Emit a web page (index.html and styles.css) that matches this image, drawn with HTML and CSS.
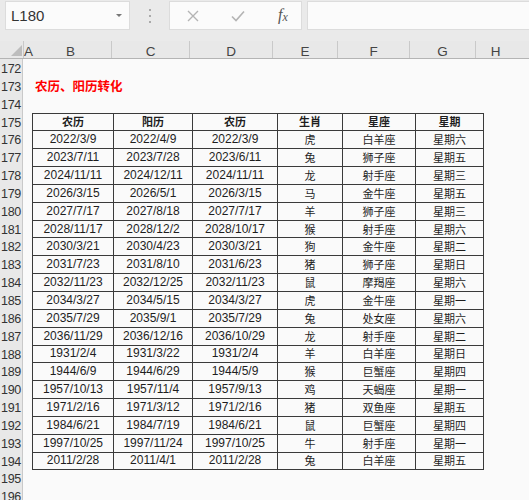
FILE: index.html
```html
<!DOCTYPE html>
<html lang="zh">
<head>
<meta charset="utf-8">
<link rel="stylesheet" href="styles.css">
</head>
<body>
<div class="toolbar">
  <div class="namebox"><span class="ref">L180</span><span class="drop"></span></div>
  <div class="dots"><i></i><i></i><i></i></div>
  <div class="btns">
    <svg class="ic" width="14" height="14" viewBox="0 0 14 14"><path d="M2 2 L12 12 M12 2 L2 12" stroke="#b4b4b4" stroke-width="1.4" fill="none"/></svg>
    <svg class="ic" width="16" height="14" viewBox="0 0 16 14"><path d="M2 7.5 L6 11.5 L14 2.5" stroke="#b4b4b4" stroke-width="1.6" fill="none"/></svg>
    <span class="fx">f<sub>x</sub></span>
  </div>
  <div class="formula"></div>
</div>
<div class="colhead">
  <div class="corner"><span class="tri"></span></div>
  <div class="ch a">A</div>
  <div class="ch b">B</div>
  <div class="ch c">C</div>
  <div class="ch d">D</div>
  <div class="ch e">E</div>
  <div class="ch f">F</div>
  <div class="ch g">G</div>
  <div class="ch h">H</div>
</div>
<div class="sheet">
  <div class="rowheads">
    <div>172</div><div>173</div><div>174</div><div>175</div><div>176</div><div>177</div><div>178</div><div>179</div><div>180</div><div>181</div><div>182</div><div>183</div><div>184</div><div>185</div><div>186</div><div>187</div><div>188</div><div>189</div><div>190</div><div>191</div><div>192</div><div>193</div><div>194</div><div>195</div><div>196</div>
  </div>
  <div class="grid">
    <div class="row"></div>
    <div class="row title">农历、阳历转化</div>
    <div class="row"></div>
    <table class="tbl">
      <colgroup><col class="cb"><col class="cc"><col class="cd"><col class="ce"><col class="cf"><col class="cg"></colgroup>
      <thead>
        <tr><th>农历</th><th>阳历</th><th>农历</th><th>生肖</th><th>星座</th><th>星期</th></tr>
      </thead>
      <tbody>
        <tr><td>2022/3/9</td><td>2022/4/9</td><td>2022/3/9</td><td class="zh">虎</td><td class="zh">白羊座</td><td class="zh">星期六</td></tr>
        <tr><td>2023/7/11</td><td>2023/7/28</td><td>2023/6/11</td><td class="zh">兔</td><td class="zh">狮子座</td><td class="zh">星期五</td></tr>
        <tr><td>2024/11/11</td><td>2024/12/11</td><td>2024/11/11</td><td class="zh">龙</td><td class="zh">射手座</td><td class="zh">星期三</td></tr>
        <tr><td>2026/3/15</td><td>2026/5/1</td><td>2026/3/15</td><td class="zh">马</td><td class="zh">金牛座</td><td class="zh">星期五</td></tr>
        <tr><td>2027/7/17</td><td>2027/8/18</td><td>2027/7/17</td><td class="zh">羊</td><td class="zh">狮子座</td><td class="zh">星期三</td></tr>
        <tr><td>2028/11/17</td><td>2028/12/2</td><td>2028/10/17</td><td class="zh">猴</td><td class="zh">射手座</td><td class="zh">星期六</td></tr>
        <tr><td>2030/3/21</td><td>2030/4/23</td><td>2030/3/21</td><td class="zh">狗</td><td class="zh">金牛座</td><td class="zh">星期二</td></tr>
        <tr><td>2031/7/23</td><td>2031/8/10</td><td>2031/6/23</td><td class="zh">猪</td><td class="zh">狮子座</td><td class="zh">星期日</td></tr>
        <tr><td>2032/11/23</td><td>2032/12/25</td><td>2032/11/23</td><td class="zh">鼠</td><td class="zh">摩羯座</td><td class="zh">星期六</td></tr>
        <tr><td>2034/3/27</td><td>2034/5/15</td><td>2034/3/27</td><td class="zh">虎</td><td class="zh">金牛座</td><td class="zh">星期一</td></tr>
        <tr><td>2035/7/29</td><td>2035/9/1</td><td>2035/7/29</td><td class="zh">兔</td><td class="zh">处女座</td><td class="zh">星期六</td></tr>
        <tr><td>2036/11/29</td><td>2036/12/16</td><td>2036/10/29</td><td class="zh">龙</td><td class="zh">射手座</td><td class="zh">星期二</td></tr>
        <tr><td>1931/2/4</td><td>1931/3/22</td><td>1931/2/4</td><td class="zh">羊</td><td class="zh">白羊座</td><td class="zh">星期日</td></tr>
        <tr><td>1944/6/9</td><td>1944/6/29</td><td>1944/5/9</td><td class="zh">猴</td><td class="zh">巨蟹座</td><td class="zh">星期四</td></tr>
        <tr><td>1957/10/13</td><td>1957/11/4</td><td>1957/9/13</td><td class="zh">鸡</td><td class="zh">天蝎座</td><td class="zh">星期一</td></tr>
        <tr><td>1971/2/16</td><td>1971/3/12</td><td>1971/2/16</td><td class="zh">猪</td><td class="zh">双鱼座</td><td class="zh">星期五</td></tr>
        <tr><td>1984/6/21</td><td>1984/7/19</td><td>1984/6/21</td><td class="zh">鼠</td><td class="zh">巨蟹座</td><td class="zh">星期四</td></tr>
        <tr><td>1997/10/25</td><td>1997/11/24</td><td>1997/10/25</td><td class="zh">牛</td><td class="zh">射手座</td><td class="zh">星期一</td></tr>
        <tr><td>2011/2/28</td><td>2011/4/1</td><td>2011/2/28</td><td class="zh">兔</td><td class="zh">白羊座</td><td class="zh">星期五</td></tr>
      </tbody>
    </table>
  </div>
</div>
</body>
</html>
```

FILE: styles.css
```css
* { box-sizing: border-box; }
html, body { margin: 0; padding: 0; }
body {
  width: 529px;
  height: 500px;
  overflow: hidden;
  background: #fafafa;
  font-family: "Liberation Sans", "Noto Sans CJK SC", sans-serif;
  color: #222;
}
.toolbar {
  height: 41px;
  background: #eaeaea;
  display: flex;
  align-items: flex-start;
  padding: 1px 0 0 5px;
}
.namebox {
  width: 125px;
  height: 29px;
  background: #fbfbfb;
  border: 1px solid #dcdcdc;
  display: flex;
  align-items: center;
  justify-content: space-between;
  padding: 0 7px 0 5px;
}
.ref { font-size: 15px; color: #333; }
.drop {
  width: 0; height: 0;
  border-left: 3px solid transparent;
  border-right: 3px solid transparent;
  border-top: 3px solid #777;
}
.dots {
  width: 39px;
  height: 29px;
  display: flex;
  flex-direction: column;
  align-items: center;
  justify-content: center;
  gap: 4px;
}
.dots i { width: 2px; height: 2px; background: #aaa; display: block; }
.btns {
  width: 133px;
  height: 29px;
  background: #fbfbfb;
  border: 1px solid #dcdcdc;
  display: flex;
  align-items: center;
  padding-left: 16px;
}
.btns .ic:first-child { margin-right: 30px; }
.btns .ic:nth-child(2) { margin-right: 32px; }
.fx {
  font-family: "Liberation Serif", serif;
  font-style: italic;
  font-size: 16px;
  color: #555;
}
.fx sub { font-size: 12px; vertical-align: -1px; }
.formula {
  flex: 1;
  height: 29px;
  margin-left: 5px;
  background: #fbfbfb;
  border: 1px solid #dcdcdc;
  border-right: none;
}
.colhead {
  height: 18px;
  display: flex;
  background: #e8e8e8;
  border-bottom: 1px solid #b4b4b4;
}
.corner {
  width: 23px;
  position: relative;
}
.tri {
  position: absolute;
  right: 1px;
  bottom: 2px;
  width: 0; height: 0;
  border-left: 11px solid transparent;
  border-bottom: 11px solid #bdbdbd;
}
.ch {
  font-size: 13.5px;
  color: #444;
  text-align: center;
  line-height: 21px;
  border-right: 1px solid #c9c9c9;
}
.ch.a { width: 7px; text-align: left; border-right: none; border-left: 1px solid #c9c9c9; }
.ch.b { width: 82px; }
.ch.c { width: 78px; }
.ch.d { width: 83px; }
.ch.e { width: 65px; }
.ch.f { width: 72px; }
.ch.g { width: 66px; }
.ch.h { flex: 1; border-right: none; padding-right: 14px; }
.sheet { display: flex; }
.rowheads {
  width: 23px;
  background: #e8e8e8;
  border-right: 1px solid #c9c9c9;
}
.rowheads div {
  height: 17.85px;
  font-size: 12.5px;
  line-height: 20px;
  color: #333;
  padding-left: 1px;
  letter-spacing: -0.3px;
}
.grid { flex: 1; padding-left: 9px; }
.row { height: 17.85px; }
.title {
  color: #ff0000;
  font-weight: bold;
  font-size: 12.5px;
  line-height: 18px;
  padding-left: 3px;
  font-family: "Noto Sans CJK SC", sans-serif;
}
.tbl {
  border-collapse: collapse;
  table-layout: fixed;
  width: 451px;
}
.cb { width: 81px; }
.cc { width: 79px; }
.cd { width: 85px; }
.ce { width: 65px; }
.cf { width: 73px; }
.cg { width: 68px; }
.tbl th, .tbl td {
  border: 1px solid #3a3a3a;
  height: 17.85px;
  padding: 0;
  text-align: center;
  font-size: 12px;
  line-height: 15px;
  color: #1e1e1e;
  white-space: nowrap;
}
.tbl th {
  font-family: "Noto Sans CJK SC", sans-serif;
  font-size: 11px;
  font-weight: bold;
}
.tbl td.zh {
  font-family: "Noto Sans CJK SC", sans-serif;
  font-size: 11px;
}
```
